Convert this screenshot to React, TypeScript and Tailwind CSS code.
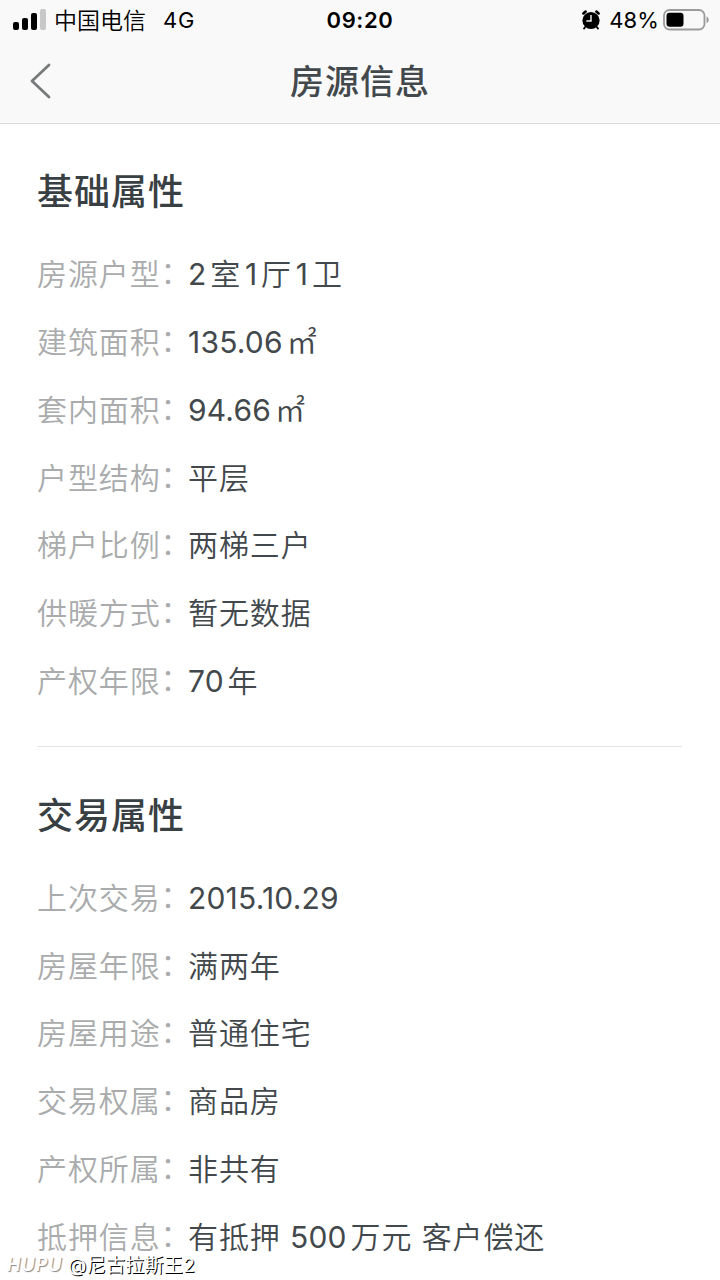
type Item = { label: string; value: string }

const basics: Item[] = [
  { label: "房源户型", value: "2室1厅1卫" },
  { label: "建筑面积", value: "135.06㎡" },
  { label: "套内面积", value: "94.66㎡" },
  { label: "户型结构", value: "平层" },
  { label: "梯户比例", value: "两梯三户" },
  { label: "供暖方式", value: "暂无数据" },
  { label: "产权年限", value: "70年" },
]

const deal: Item[] = [
  { label: "上次交易", value: "2015.10.29" },
  { label: "房屋年限", value: "满两年" },
  { label: "房屋用途", value: "普通住宅" },
  { label: "交易权属", value: "商品房" },
  { label: "产权所属", value: "非共有" },
  { label: "抵押信息", value: "有抵押 500万元 客户偿还" },
]

function StatusBar() {
  return (
    <div className="grid h-10 grid-cols-3 items-center text-[22px] leading-none text-black">
      <div className="flex items-center pl-[13px]">
        <svg width="33" height="22" viewBox="0 0 33 22">
          <rect x="0" y="13" width="6" height="8" rx="2" />
          <rect x="9" y="9" width="6" height="12" rx="2" />
          <rect x="18" y="4" width="6" height="17" rx="2" />
          <rect x="27" y="0" width="6" height="21" rx="2" fill="#c8c8c8" />
        </svg>
        <span className="ml-2 pt-[2px] text-[23px] font-[350]">中国电信</span>
        <span className="ml-[17px] tracking-[0.8px]">4G</span>
      </div>
      <div className="text-center text-[22px] font-semibold tracking-[0.6px]">09:20</div>
      <div className="flex items-center justify-end pr-[10px]">
        <svg width="20" height="20" viewBox="0 0 20 20">
          <circle cx="11" cy="10.5" r="8.6" />
          <path d="M3.4 3.4 5.6 1.6M18.6 3.4 16.4 1.6" stroke="#000" strokeWidth="2.6" strokeLinecap="round" />
          <path d="M5.2 17 4 18.6M16.8 17l1.2 1.6" stroke="#000" strokeWidth="1.8" strokeLinecap="round" />
          <path d="M11 5v6H6.4" fill="none" stroke="#f9f9f9" strokeWidth="1.4" />
        </svg>
        <span className="ml-[9px] tracking-[0.1px]">48%</span>
        <svg className="ml-1" width="47" height="22" viewBox="0 0 47 22">
          <rect x="1" y="1" width="40.5" height="19.5" rx="5.5" fill="none" stroke="#9b9b9b" strokeWidth="1.8" />
          <rect x="3.5" y="3.8" width="17" height="14" rx="3" />
          <path d="M43.5 7.5c3 1.2 3 5.5 0 6.7z" fill="#9b9b9b" />
        </svg>
      </div>
    </div>
  )
}

// digits are set tighter than the Chinese text around them
function Value({ text }: { text: string }) {
  return text.split(/([\d.]+|㎡)/).map((part, i) => {
    if (part === "㎡") return <span key={i} className="ml-[4px]">㎡</span>
    if (/^[\d.]+$/.test(part)) return <span key={i} className="font-normal tracking-[0.2px]">{part}</span>
    return part
  })
}

function Section({ title, items }: { title: string; items: Item[] }) {
  return (
    <section>
      <h2 className="flex h-[50px] items-center pt-[2px] text-[36px] font-medium tracking-[1px] text-[#394043]">{title}</h2>
      <dl className="mt-[24.4px]">
        {items.map((item) => (
          <div key={item.label} className="flex h-[67.8px] items-center text-[30px] leading-9 tracking-[0.9px] whitespace-nowrap">
            <dt className="flex w-[151px] shrink-0 font-[350] text-[#a9abac]">
              {item.label}
              <span className="-mt-[2px] tracking-[-4px]">：</span>
            </dt>
            <dd className="font-[350] text-[#42484b] [text-autospace:normal]">
              <Value text={item.value} />
            </dd>
          </div>
        ))}
      </dl>
    </section>
  )
}

export default function App() {
  return (
    <div className="relative h-[1280px] w-[720px] overflow-hidden bg-white font-[Inter,'Noto_Sans_CJK_SC',sans-serif]">
      <header className="h-[124px] border-b border-[#d9d9d9] bg-[#f9f9f9]">
        <StatusBar />
        <div className="grid h-[82px] grid-cols-[80px_1fr_80px] items-center">
          <button className="pl-[30px]" aria-label="返回">
            <svg width="22" height="36" viewBox="0 0 22 36" fill="none" stroke="#777a7b" strokeWidth="2.8" strokeLinecap="round" strokeLinejoin="round">
              <path d="M19 2 2 18l17 16" />
            </svg>
          </button>
          <h1 className="text-center text-[34px] font-medium tracking-[1px] text-[#42484b]">房源信息</h1>
        </div>
      </header>

      <main className="pr-[38px] pl-[37px] pt-[42px]">
        <Section title="基础属性" items={basics} />
        <hr className="mt-[30.6px] mb-[43px] border-[#e3e3e3]" />
        <Section title="交易属性" items={deal} />
      </main>

      <div className="absolute bottom-0 left-[7px] flex h-[30px] items-center whitespace-nowrap">
        <span className="w-[61px] pb-[2px] text-[18px] font-semibold italic tracking-[1px] text-white [text-shadow:1px_1px_1px_#888]">HUPU</span>
        <span className="pt-[2px] text-[19px] tracking-[0.3px] text-white [text-shadow:1px_1px_0_#000]">@尼古拉斯王2</span>
      </div>
    </div>
  )
}
